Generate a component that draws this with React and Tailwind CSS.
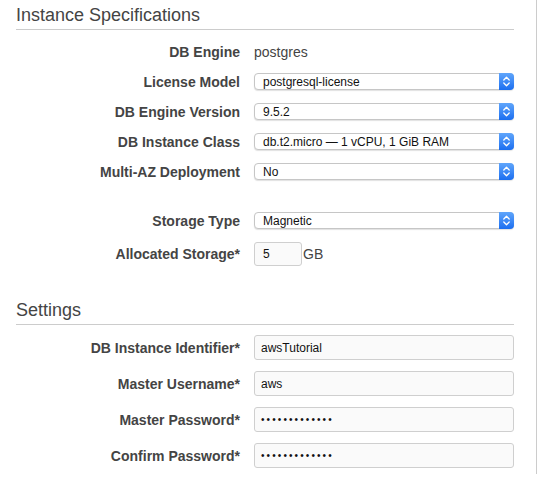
import React from 'react';

const font = { fontFamily: '"Liberation Sans", Arial, sans-serif' };

const Chevrons = () => (
  <svg width="15" height="17" viewBox="0 0 15 17" fill="none">
    <path d="M4.8 7 L7.5 4.3 L10.2 7" stroke="white" strokeWidth="1.3" strokeLinecap="round" strokeLinejoin="round" />
    <path d="M4.8 10 L7.5 12.7 L10.2 10" stroke="white" strokeWidth="1.3" strokeLinecap="round" strokeLinejoin="round" />
  </svg>
);

const Label = ({ children }) => (
  <div className="w-[238px] shrink-0 pr-[14px] text-right text-[14px] font-bold leading-none text-[#444]">{children}</div>
);

const Select = ({ value }) => (
  <div className="flex h-[17px] w-[260px] items-stretch rounded-[4px] border border-[#c6c6c6] bg-white shadow-[0_1px_1px_rgba(0,0,0,0.12)]">
    <div className="flex flex-1 items-center pl-[8px] text-[12px] leading-none text-[#111]">{value}</div>
    <div className="-my-px -mr-px flex w-[15px] items-center justify-center rounded-r-[4px] bg-gradient-to-b from-[#5fa5fb] to-[#1a6ef0]">
      <Chevrons />
    </div>
  </div>
);

const TextBox = ({ value, dots }) => (
  <div className="flex h-[25px] w-[260px] items-center rounded-[3px] border border-[#cfcfcf] bg-[#fafafa] px-[6px] text-[12px] leading-none text-[#111]">
    {dots ? <span className="text-[10px] tracking-[2.1px]">{'•'.repeat(13)}</span> : value}
  </div>
);

const Heading = ({ children, className }) => (
  <div className={`border-b border-[#cccccc] pb-[4px] text-[18px] leading-[20px] text-[#444] ${className}`}>{children}</div>
);

const SelectRow = ({ label, value }) => (
  <div className="flex items-center">
    <Label>{label}</Label>
    <Select value={value} />
  </div>
);

const InputRow = ({ label, value, dots }) => (
  <div className="flex items-center">
    <Label>{label}</Label>
    <TextBox value={value} dots={dots} />
  </div>
);

export default function App() {
  return (
    <div className="bg-white" style={font}>
      <div className="w-[537px] border-r border-[#cccccc] pb-[6px] pl-[16px] pr-[22px] pt-[5px]">
        <Heading>Instance Specifications</Heading>

        <div className="mt-[13px] flex h-[18px] items-center">
          <Label>DB Engine</Label>
          <div className="text-[14px] leading-none text-[#444]">postgres</div>
        </div>

        <div className="mt-[12px] flex flex-col gap-[13px]">
          <SelectRow label="License Model" value="postgresql-license" />
          <SelectRow label="DB Engine Version" value="9.5.2" />
          <SelectRow label="DB Instance Class" value="db.t2.micro — 1 vCPU, 1 GiB RAM" />
          <SelectRow label="Multi-AZ Deployment" value="No" />
        </div>

        <div className="mt-[32px]">
          <SelectRow label="Storage Type" value="Magnetic" />
        </div>

        <div className="mt-[13px] flex items-center">
          <Label>Allocated Storage*</Label>
          <div className="flex h-[24px] w-[48px] items-center rounded-[3px] border border-[#cfcfcf] bg-[#fafafa] px-[8px] text-[12px] leading-none text-[#111]">5</div>
          <span className="ml-px text-[14px] leading-none text-[#444]">GB</span>
        </div>

        <Heading className="mt-[34px]">Settings</Heading>

        <div className="mt-[10px] flex flex-col gap-[11px]">
          <InputRow label="DB Instance Identifier*" value="awsTutorial" />
          <InputRow label="Master Username*" value="aws" />
          <InputRow label="Master Password*" dots />
          <InputRow label="Confirm Password*" dots />
        </div>
      </div>
    </div>
  );
}
